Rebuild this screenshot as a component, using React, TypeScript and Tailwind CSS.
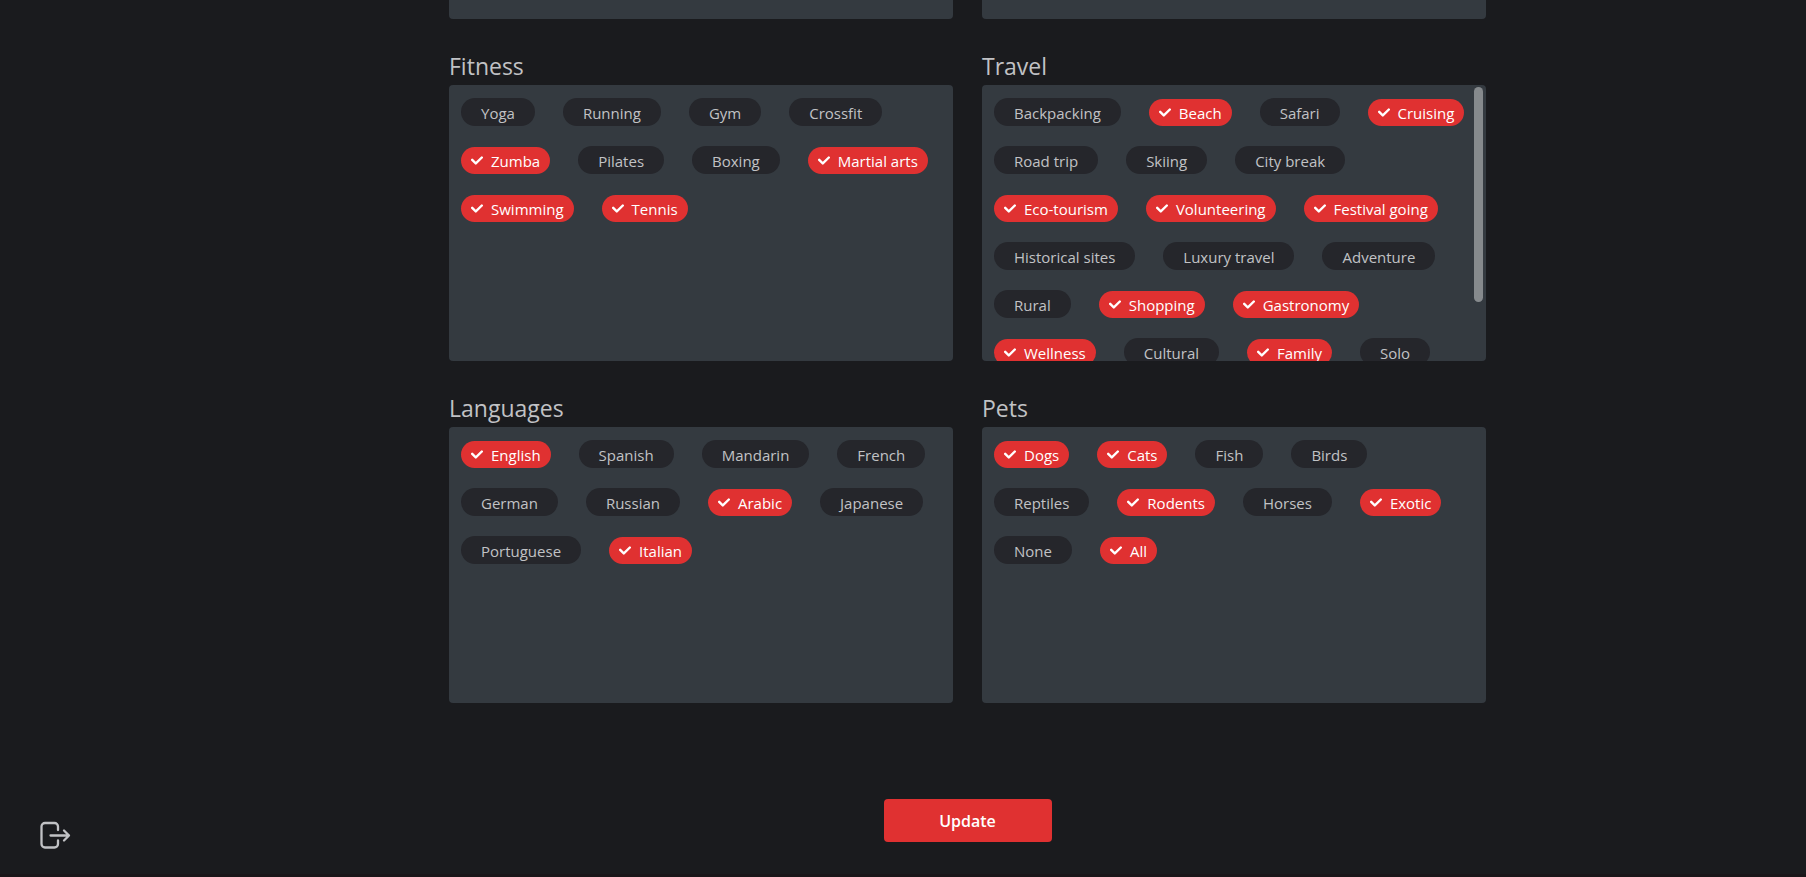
import { useState } from "react";

type Section = { title: string; options: string[]; selected: string[]; scroll?: boolean };

const sections: Section[] = [
  {
    title: "Fitness",
    options: ["Yoga", "Running", "Gym", "Crossfit", "Zumba", "Pilates", "Boxing", "Martial arts", "Swimming", "Tennis"],
    selected: ["Zumba", "Martial arts", "Swimming", "Tennis"],
  },
  {
    title: "Travel",
    options: [
      "Backpacking", "Beach", "Safari", "Cruising", "Road trip", "Skiing", "City break", "Eco-tourism",
      "Volunteering", "Festival going", "Historical sites", "Luxury travel", "Adventure", "Rural", "Shopping",
      "Gastronomy", "Wellness", "Cultural", "Family", "Solo",
    ],
    selected: ["Beach", "Cruising", "Eco-tourism", "Volunteering", "Festival going", "Shopping", "Gastronomy", "Wellness", "Family"],
    scroll: true,
  },
  {
    title: "Languages",
    options: ["English", "Spanish", "Mandarin", "French", "German", "Russian", "Arabic", "Japanese", "Portuguese", "Italian"],
    selected: ["English", "Arabic", "Italian"],
  },
  {
    title: "Pets",
    options: ["Dogs", "Cats", "Fish", "Birds", "Reptiles", "Rodents", "Horses", "Exotic", "None", "All"],
    selected: ["Dogs", "Cats", "Rodents", "Exotic", "All"],
  },
];

function Chip({ label, initial }: { label: string; initial: boolean }) {
  const [checked, setChecked] = useState(initial);
  return (
    <div className="flex h-7 items-end">
      <label
        className={
          checked
            ? "flex h-[27px] cursor-pointer items-center rounded-full bg-[#e03131] px-[10px] text-white"
            : "flex h-7 cursor-pointer items-center rounded-full bg-[#25262b] px-5 text-[#c1c2c5]"
        }
      >
        <input type="checkbox" className="sr-only" checked={checked} onChange={() => setChecked(!checked)} />
        {checked && (
          <svg viewBox="0 0 10 7" className="mr-2 h-[9px] w-3" fill="none" aria-hidden="true">
            <path
              d="M4 4.586L1.707 2.293A1 1 0 1 0 .293 3.707l3 3a.997.997 0 0 0 1.414 0l5-5A1 1 0 1 0 8.293.293L4 4.586z"
              fill="currentColor"
              fillRule="evenodd"
              clipRule="evenodd"
            />
          </svg>
        )}
        <span className={checked ? "" : "pt-[2px]"}>{label}</span>
      </label>
    </div>
  );
}

function Panel({ section }: { section: Section }) {
  return (
    <section>
      <h2 className="h-9 text-[23px] leading-[34px] text-[#c1c2c5]">{section.title}</h2>
      <div className="relative h-[276px] overflow-hidden rounded bg-[#343a40]">
        <div className="flex flex-wrap gap-x-7 gap-y-5 py-[13px] pr-4 pl-3 text-[15px] leading-[26px]">
          {section.options.map((o) => (
            <Chip key={o} label={o} initial={section.selected.includes(o)} />
          ))}
        </div>
        {section.scroll && <div className="absolute top-[2px] right-[3px] h-[215px] w-[9px] rounded-full bg-[#868a8d]" />}
      </div>
    </section>
  );
}

export default function App() {
  return (
    <div className="flex min-h-screen flex-col bg-[#1a1b1e] font-['Open_Sans','Noto_Sans',sans-serif]">
      <div className="flex flex-1">
        <aside className="flex w-[129px] shrink-0 flex-col justify-end pb-5 pl-[37px]">
          <button type="button" aria-label="Log out" className="flex size-9 items-center justify-center text-[#c1c2c5]">
            <svg viewBox="0 0 36 36" className="size-9" fill="none" stroke="currentColor" strokeWidth="2.3" strokeLinecap="round" strokeLinejoin="round" aria-hidden="true">
              <path d="M21 12V8.500a3.500 3.500 0 0 0-3.500-3.500H8a3.500 3.500 0 0 0-3.500 3.500v17.500a3.500 3.500 0 0 0 3.500 3.500h9.500a3.500 3.500 0 0 0 3.500-3.500v-3.500" />
              <path d="M13.500 17.500H32M27 12.500l5 5-5 5" />
            </svg>
          </button>
        </aside>
        <main className="flex flex-1 flex-col items-center">
          <div className="grid w-full max-w-[1037px] grid-cols-2 gap-x-[29px] gap-y-[30px]">
            <div className="h-[19px] rounded-b bg-[#343a40]" />
            <div className="h-[19px] rounded-b bg-[#343a40]" />
            {sections.map((s) => (
              <Panel key={s.title} section={s} />
            ))}
          </div>
          <button type="button" className="mt-24 h-[43px] w-[168px] rounded bg-[#e03131] text-base font-semibold text-white">
            Update
          </button>
        </main>
      </div>
      <footer className="h-[3px] bg-[#1a1619]" />
    </div>
  );
}
